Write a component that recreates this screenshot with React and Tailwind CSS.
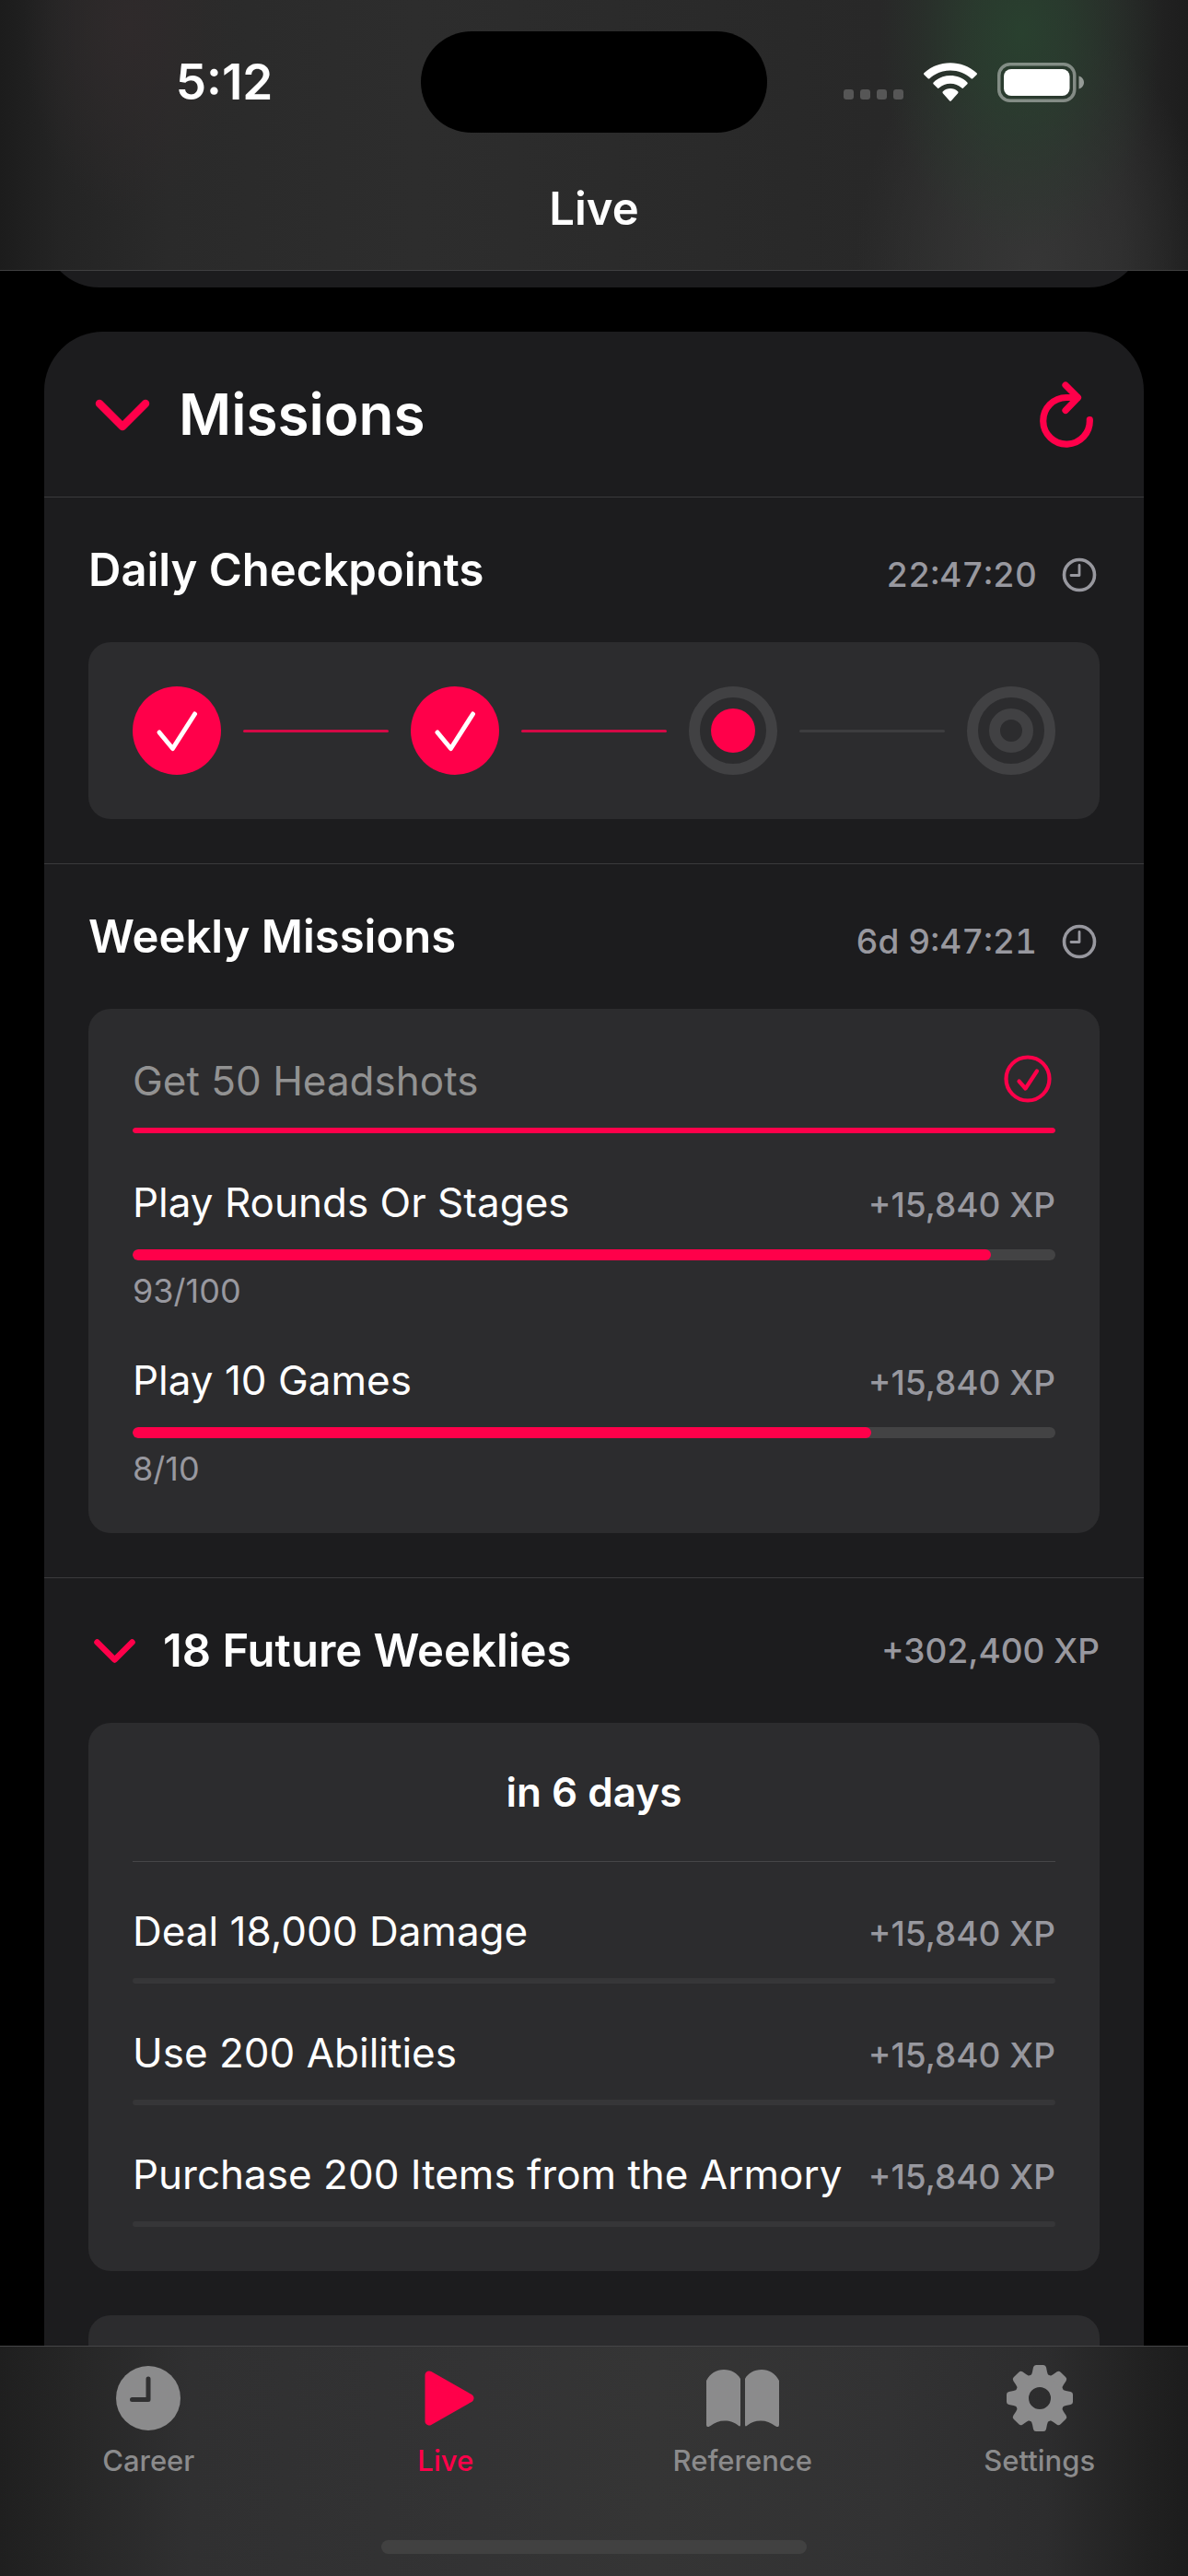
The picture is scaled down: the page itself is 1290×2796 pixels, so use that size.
import React from "react";

const STEPS = ["done", "done", "active", "final"];

const WEEKLY = [
  { name: "Get 50 Headshots", value: 50, total: 50 },
  { name: "Play Rounds Or Stages", value: 93, total: 100 },
  { name: "Play 10 Games", value: 8, total: 10 },
];

const FUTURE = ["Deal 18,000 Damage", "Use 200 Abilities", "Purchase 200 Items from the Armory"];

function Wifi() {
  return (
    <svg viewBox="0 0 17.15 12.33" className="h-[42px] w-[58px]" fill="#fff" role="img" aria-label="Wi-Fi">
      <path d="M8.57 2.47C11.06 2.47 13.45 3.39 15.25 5.04C15.39 5.17 15.61 5.17 15.74 5.04L17.04 3.77C17.18 3.64 17.18 3.42 17.03 3.28C12.3 -1.09 4.84 -1.09 0.11 3.28C-0.03 3.42 -0.03 3.64 0.1 3.77L1.4 5.04C1.54 5.17 1.75 5.17 1.89 5.04C3.69 3.39 6.08 2.47 8.57 2.47ZM8.57 6.69C9.93 6.69 11.23 7.2 12.24 8.12C12.38 8.25 12.59 8.25 12.72 8.12L14.01 6.8C14.15 6.66 14.15 6.42 14.01 6.28C10.94 3.4 6.2 3.4 3.13 6.28C2.99 6.42 2.99 6.66 3.13 6.8L4.42 8.12C4.55 8.25 4.76 8.25 4.9 8.12C5.9 7.2 7.21 6.69 8.57 6.69ZM11.09 9.48C11.09 9.59 11.06 9.69 10.99 9.76L8.81 12.22C8.68 12.36 8.46 12.36 8.33 12.22L6.15 9.76C6.02 9.6 6.02 9.36 6.16 9.2C7.55 7.91 9.59 7.91 10.98 9.2C11.05 9.27 11.09 9.37 11.09 9.48Z" />
    </svg>
  );
}

function Battery() {
  return (
    <svg viewBox="0 0 95 43" className="h-[43px] w-[95px]" role="img" aria-label="Battery">
      <rect x="1.75" y="1.75" width="82" height="39.5" rx="12" fill="none" stroke="#fff" strokeOpacity="0.42" strokeWidth="3.5" />
      <path d="M88.500 14.500C92 15.500 94 18.500 94 21.500C94 24.500 92 27.500 88.500 28.500Z" fill="#fff" fillOpacity="0.5" />
      <rect x="7" y="7" width="71.500" height="29" rx="8" fill="#fff" />
    </svg>
  );
}

function Chevron({ small }) {
  return small ? (
    <svg viewBox="0 0 57 40" className="h-10 w-[57px]" fill="none" stroke="#ff004a" strokeWidth="6.500" strokeLinecap="round" strokeLinejoin="round" aria-hidden="true">
      <path d="M9.500 10.500L28.500 29.500L47.500 10.500" />
    </svg>
  ) : (
    <svg viewBox="0 0 74 48" className="h-12 w-[74px]" fill="none" stroke="#ff004a" strokeWidth="8.500" strokeLinecap="round" strokeLinejoin="round" aria-hidden="true">
      <path d="M12 12L37 37L62 12" />
    </svg>
  );
}

function Refresh() {
  return (
    <svg viewBox="0 0 72 72" className="size-[72px]" fill="none" stroke="#ff004a" strokeWidth="7.200" strokeLinecap="round" strokeLinejoin="round" aria-hidden="true">
      <path d="M61.300 41.500A25.300 25.300 0 1 1 36 17.500H48" />
      <path d="M35 4L48.500 17.500L35 31.500" />
    </svg>
  );
}

function ClockOutline() {
  return (
    <svg viewBox="0 0 44 44" className="size-11" fill="none" stroke="#98989f" strokeLinecap="round" strokeLinejoin="round" aria-hidden="true">
      <circle cx="22" cy="22" r="16.500" strokeWidth="3.600" />
      <path d="M22 11.500V22.500H13" strokeWidth="2.800" />
    </svg>
  );
}

function CheckCircle() {
  return (
    <svg viewBox="0 0 60 60" className="size-[60px]" fill="none" stroke="#ff004a" strokeWidth="4.200" strokeLinecap="round" strokeLinejoin="round" role="img" aria-label="Completed">
      <circle cx="30" cy="28" r="23.500" />
      <path d="M20.500 30.500L27.500 38.500L40 19.500" />
    </svg>
  );
}

function Step({ kind }) {
  if (kind === "done") {
    return (
      <svg viewBox="0 0 96 96" className="size-24 shrink-0" role="img" aria-label="Checkpoint complete">
        <circle cx="48" cy="48" r="48" fill="#ff004a" />
        <path d="M29 50L43.500 67.500L67.500 30" fill="none" stroke="#fff" strokeWidth="5" strokeLinecap="round" strokeLinejoin="round" />
      </svg>
    );
  }
  return (
    <svg viewBox="0 0 96 96" className="size-24 shrink-0" fill="none" stroke="#414143" strokeWidth="12" role="img" aria-label={kind === "active" ? "Current checkpoint" : "Final checkpoint"}>
      <circle cx="48" cy="48" r="42" />
      {kind === "active" ? <circle cx="48" cy="48" r="24" fill="#ff004a" stroke="none" /> : <circle cx="48" cy="48" r="18" />}
    </svg>
  );
}

function CareerIcon() {
  return (
    <svg viewBox="0 0 70 70" className="size-[70px]" aria-hidden="true">
      <circle cx="35" cy="35" r="35" fill="#8b8b8c" />
      <path d="M35 14V36.500H17.500" fill="none" stroke="#303031" strokeWidth="5" strokeLinecap="round" strokeLinejoin="round" />
    </svg>
  );
}

function PlayIcon() {
  return (
    <svg viewBox="0 0 60 60" className="size-[60px] overflow-visible" fill="#ff004a" stroke="#ff004a" strokeWidth="9" strokeLinejoin="round" aria-hidden="true">
      <path d="M12 5L56 30L12 55Z" />
    </svg>
  );
}

function BookIcon() {
  const page = "M0 12C4 4 11 0 19 0C27 0 34 4 37 10V60Q37 62.500 34.500 60.500C30 57 26 55.500 20 55.500C14 55.500 9 57.500 4.500 61Q0 64 0 59.500Z";
  return (
    <svg viewBox="0 0 79 62" className="h-[62px] w-[79px]" fill="#8b8b8c" aria-hidden="true">
      <path d={page} />
      <path d={page} transform="matrix(-1 0 0 1 79 0)" />
    </svg>
  );
}

function GearIcon() {
  return (
    <svg viewBox="-36 -36 72 72" className="size-[72px]" fill="#8b8b8c" aria-hidden="true">
      <circle r="19.500" fill="none" stroke="#8b8b8c" strokeWidth="15" />
      {[0, 45, 90, 135, 180, 225, 270, 315].map((a) => (
        <path key={a} transform={`rotate(${a})`} d="M-10 -24Q-8.500 -26 -8 -28.500L-7 -33.500Q-6.500 -36 -4 -36H4Q6.500 -36 7 -33.500L8 -28.500Q8.500 -26 10 -24Z" />
      ))}
    </svg>
  );
}

const TABS = [
  { label: "Career", icon: <CareerIcon /> },
  { label: "Live", icon: <PlayIcon />, active: true },
  { label: "Reference", icon: <BookIcon /> },
  { label: "Settings", icon: <GearIcon /> },
];

function Countdown({ children }) {
  return (
    <div className="flex items-center gap-6 pt-2.5">
      <time className="text-[37px] leading-10 font-medium text-[#98989f] tabular-nums">{children}</time>
      <ClockOutline />
    </div>
  );
}

function SectionHead({ children }) {
  return <div className="flex items-center justify-between py-12 whitespace-nowrap">{children}</div>;
}

function Mission({ name, value, total }) {
  const done = value === total;
  const started = value > 0 && !done;
  return (
    <li>
      <div className="flex h-[60px] items-baseline justify-between gap-4 whitespace-nowrap">
        <span className={done ? "text-[44px] leading-[60px] text-[#929292]" : "text-[44px] leading-[60px] text-white"}>{name}</span>
        {done ? (
          <span className="self-start">
            <CheckCircle />
          </span>
        ) : (
          <span className="text-[37px] leading-10 font-medium text-[#98989f]">+15,840 XP</span>
        )}
      </div>
      <div
        role="progressbar"
        aria-label={name}
        aria-valuenow={value}
        aria-valuemax={total}
        className={started ? "mt-[21px] h-3 overflow-hidden rounded-full bg-[#434344]" : "mt-[21px] h-1.5 overflow-hidden rounded-full bg-[#363638]"}
      >
        <div className="h-full rounded-full bg-[#ff004a]" style={{ width: `${(100 * value) / total}%` }} />
      </div>
      {started && (
        <p className="mt-3 text-4xl leading-[43px] text-[#98989f]">
          {value}/{total}
        </p>
      )}
    </li>
  );
}

export default function App() {
  return (
    <div className="flex h-screen flex-col overflow-hidden bg-black font-['Inter','Liberation_Sans',sans-serif] text-white">
      <header className="h-[294px] shrink-0 border-b border-[#3f3f40] bg-[radial-gradient(ellipse_12%_80%_at_86%_12%,#29402f_0%,#29402fb0_35%,#29402f40_70%,#29402f00_100%),radial-gradient(ellipse_15%_95%_at_87%_100%,#363636_0%,#36363690_50%,#36363600_100%),radial-gradient(ellipse_9%_70%_at_11%_10%,#2f2a2b_0%,#2f2a2b00_100%),linear-gradient(90deg,#1c1c1c_0%,#242424_5%,#2a2a2a_14%,#2d2d2d_35%,#2a2a2a_60%,#282828_74%,#2a2b2a_84%,#272727_94%,#1d1d1d_100%)]">
        <div className="flex items-center pt-[34px]">
          <div className="flex flex-1 justify-center pl-[30px] text-[53px] leading-[60px] font-semibold">5:12</div>
          <div className="h-[110px] w-[376px] rounded-full bg-black" />
          <div className="flex flex-1 items-center justify-center gap-[22px] pr-[30px]">
            <div className="flex gap-[7px] pt-[26px]">
              {[0, 1, 2, 3].map((i) => (
                <span key={i} className="size-[11px] rounded-[3px] bg-[#565656]" />
              ))}
            </div>
            <Wifi />
            <Battery />
          </div>
        </div>
        <h1 className="mt-[53px] text-center text-[49px] leading-[60px] font-semibold">Live</h1>
      </header>

      <main className="min-h-0 flex-1 overflow-hidden px-12">
        <div className="-mt-[60px] h-[78px] rounded-b-[60px] bg-[#1c1c1e]" />

        <section className="mt-12 rounded-t-[64px] bg-[#1c1c1e]">
          <div className="flex h-[180px] items-center justify-between border-b border-[#3a3a3c] px-12">
            <button type="button" aria-expanded="true" className="flex items-center gap-6 text-[62px] leading-[78px] font-semibold">
              <Chevron />
              Missions
            </button>
            <button type="button" aria-label="Refresh missions">
              <Refresh />
            </button>
          </div>

          <div className="border-b border-[#3a3a3c] px-12 pb-12">
            <SectionHead>
              <h2 className="text-[49px] leading-[61px] font-semibold">Daily Checkpoints</h2>
              <Countdown>22:47:20</Countdown>
            </SectionHead>
            <div className="flex items-center gap-6 rounded-3xl bg-[#2c2c2e] p-12">
              {STEPS.map((kind, i) => (
                <React.Fragment key={i}>
                  {i > 0 && <span className={i < 3 ? "h-[3px] flex-1 rounded-full bg-[#d40945]" : "h-[3px] flex-1 rounded-full bg-[#3d3d3f]"} />}
                  <Step kind={kind} />
                </React.Fragment>
              ))}
            </div>
          </div>

          <div className="border-b border-[#3a3a3c] px-12 pb-12">
            <SectionHead>
              <h2 className="text-[49px] leading-[61px] font-semibold">Weekly Missions</h2>
              <Countdown>6d 9:47:21</Countdown>
            </SectionHead>
            <ul className="flex flex-col gap-[45px] rounded-3xl bg-[#2c2c2e] p-12">
              {WEEKLY.map((m) => (
                <Mission key={m.name} {...m} />
              ))}
            </ul>
          </div>

          <div className="px-12">
            <SectionHead>
              <button type="button" aria-expanded="true" className="flex items-center gap-6 text-[49px] leading-[61px] font-semibold">
                <Chevron small />
                18 Future Weeklies
              </button>
              <span className="text-[37px] leading-10 font-medium text-[#98989f]">+302,400 XP</span>
            </SectionHead>
            <div className="rounded-3xl bg-[#2c2c2e] p-12">
              <h3 className="border-b border-[#464648] pb-12 text-center text-[44px] leading-[54px] font-semibold">in 6 days</h3>
              <ul className="flex flex-col gap-[45px] pt-[45px]">
                {FUTURE.map((name) => (
                  <Mission key={name} name={name} value={0} total={100} />
                ))}
              </ul>
            </div>
            <div className="mt-12 h-48 rounded-3xl bg-[#2c2c2e]" />
          </div>
        </section>
      </main>

      <nav className="flex h-[250px] shrink-0 flex-col items-center justify-between border-t border-[#454547] bg-[linear-gradient(90deg,#1f1f1f_0%,#262626_6%,#303031_16%,#333334_40%,#353535_55%,#323233_75%,#2d2d2e_88%,#232323_95%,#1c1c1c_100%)] pb-6">
        <div className="flex w-full pt-5">
          {TABS.map((t) => (
            <a
              key={t.label}
              href={`#${t.label.toLowerCase()}`}
              aria-current={t.active ? "page" : undefined}
              className={t.active ? "flex flex-1 flex-col items-center gap-3.5 text-[31px] leading-9 font-medium text-[#ff004a]" : "flex flex-1 flex-col items-center gap-3.5 text-[31px] leading-9 font-medium text-[#8b8b8c]"}
            >
              <span className="flex h-[72px] items-center">{t.icon}</span>
              {t.label}
            </a>
          ))}
        </div>
        <div className="h-[15px] w-[462px] rounded-full bg-[#414141]" />
      </nav>
    </div>
  );
}
